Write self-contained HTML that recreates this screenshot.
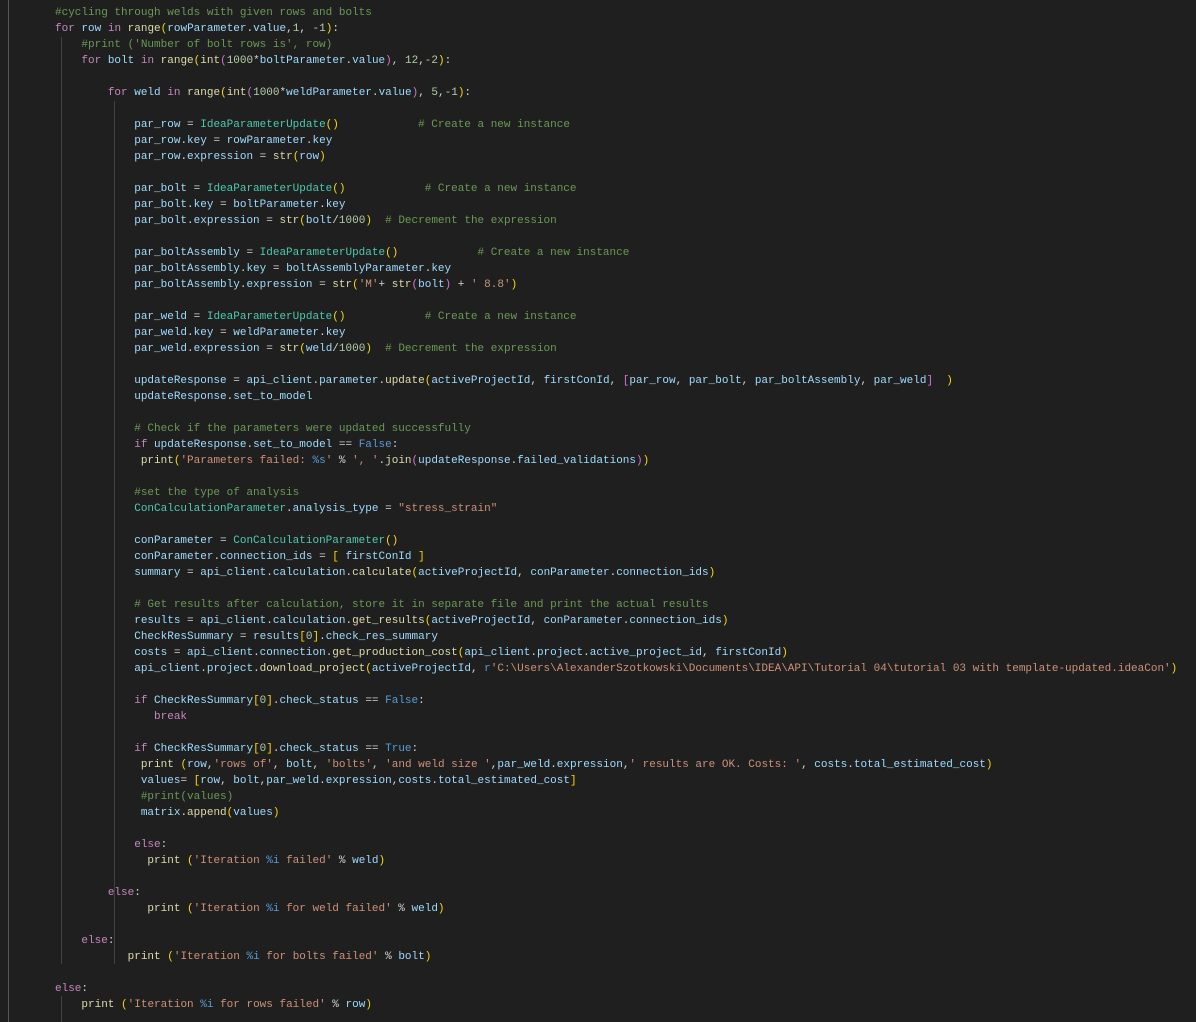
<!DOCTYPE html>
<html><head><meta charset="utf-8"><style>
html,body{margin:0;padding:0;background:#1f1f1f;width:1196px;height:1022px;overflow:hidden}
pre{position:absolute;left:55px;top:5px;margin:0;font-family:"Liberation Mono",monospace;font-size:11px;line-height:16px;color:#d4d4d4}
.k{color:#c586c0}.v{color:#9cdcfe}.f{color:#dcdcaa}.c{color:#6a9955}.n{color:#b5cea8}.s{color:#ce9178}.t{color:#4ec9b0}.b{color:#569cd6}
.p1{color:#ffd700}.p2{color:#da70d6}.p3{color:#179fff}
.g{position:absolute;width:1px;background:#404040}
</style></head><body>
<div class="g" style="left:8px;top:0;height:1022px;background:#555"></div>
<div class="g" style="left:61px;top:37px;height:927px"></div>
<div class="g" style="left:61px;top:996px;height:26px"></div>
<div class="g" style="left:114px;top:101px;height:863px"></div>
<pre><span class="c">#cycling through welds with given rows and bolts</span>
<span class="k">for</span> <span class="v">row</span> <span class="k">in</span> <span class="f">range</span><span class="p1">(</span><span class="v">rowParameter</span>.<span class="v">value</span>,<span class="n">1</span>, <span class="n">-1</span><span class="p1">)</span>:
    <span class="c">#print ('Number of bolt rows is', row)</span>
    <span class="k">for</span> <span class="v">bolt</span> <span class="k">in</span> <span class="f">range</span><span class="p1">(</span><span class="f">int</span><span class="p2">(</span><span class="n">1000</span>*<span class="v">boltParameter</span>.<span class="v">value</span><span class="p2">)</span>, <span class="n">12</span>,<span class="n">-2</span><span class="p1">)</span>:

        <span class="k">for</span> <span class="v">weld</span> <span class="k">in</span> <span class="f">range</span><span class="p1">(</span><span class="f">int</span><span class="p2">(</span><span class="n">1000</span>*<span class="v">weldParameter</span>.<span class="v">value</span><span class="p2">)</span>, <span class="n">5</span>,<span class="n">-1</span><span class="p1">)</span>:

            <span class="v">par_row</span> = <span class="t">IdeaParameterUpdate</span><span class="p1">()</span>            <span class="c"># Create a new instance</span>
            <span class="v">par_row</span>.<span class="v">key</span> = <span class="v">rowParameter</span>.<span class="v">key</span>
            <span class="v">par_row</span>.<span class="v">expression</span> = <span class="f">str</span><span class="p1">(</span><span class="v">row</span><span class="p1">)</span>

            <span class="v">par_bolt</span> = <span class="t">IdeaParameterUpdate</span><span class="p1">()</span>            <span class="c"># Create a new instance</span>
            <span class="v">par_bolt</span>.<span class="v">key</span> = <span class="v">boltParameter</span>.<span class="v">key</span>
            <span class="v">par_bolt</span>.<span class="v">expression</span> = <span class="f">str</span><span class="p1">(</span><span class="v">bolt</span>/<span class="n">1000</span><span class="p1">)</span>  <span class="c"># Decrement the expression</span>

            <span class="v">par_boltAssembly</span> = <span class="t">IdeaParameterUpdate</span><span class="p1">()</span>            <span class="c"># Create a new instance</span>
            <span class="v">par_boltAssembly</span>.<span class="v">key</span> = <span class="v">boltAssemblyParameter</span>.<span class="v">key</span>
            <span class="v">par_boltAssembly</span>.<span class="v">expression</span> = <span class="f">str</span><span class="p1">(</span><span class="s">'M'</span>+ <span class="f">str</span><span class="p2">(</span><span class="v">bolt</span><span class="p2">)</span> + <span class="s">' 8.8'</span><span class="p1">)</span>

            <span class="v">par_weld</span> = <span class="t">IdeaParameterUpdate</span><span class="p1">()</span>            <span class="c"># Create a new instance</span>
            <span class="v">par_weld</span>.<span class="v">key</span> = <span class="v">weldParameter</span>.<span class="v">key</span>
            <span class="v">par_weld</span>.<span class="v">expression</span> = <span class="f">str</span><span class="p1">(</span><span class="v">weld</span>/<span class="n">1000</span><span class="p1">)</span>  <span class="c"># Decrement the expression</span>

            <span class="v">updateResponse</span> = <span class="v">api_client</span>.<span class="v">parameter</span>.<span class="f">update</span><span class="p1">(</span><span class="v">activeProjectId</span>, <span class="v">firstConId</span>, <span class="p2">[</span><span class="v">par_row</span>, <span class="v">par_bolt</span>, <span class="v">par_boltAssembly</span>, <span class="v">par_weld</span><span class="p2">]</span>  <span class="p1">)</span>
            <span class="v">updateResponse</span>.<span class="v">set_to_model</span>

            <span class="c"># Check if the parameters were updated successfully</span>
            <span class="k">if</span> <span class="v">updateResponse</span>.<span class="v">set_to_model</span> == <span class="b">False</span>:
             <span class="f">print</span><span class="p1">(</span><span class="s">'Parameters failed: </span><span class="b">%s</span><span class="s">'</span> % <span class="s">', '</span>.<span class="f">join</span><span class="p2">(</span><span class="v">updateResponse</span>.<span class="v">failed_validations</span><span class="p2">)</span><span class="p1">)</span>

            <span class="c">#set the type of analysis</span>
            <span class="t">ConCalculationParameter</span>.<span class="v">analysis_type</span> = <span class="s">"stress_strain"</span>

            <span class="v">conParameter</span> = <span class="t">ConCalculationParameter</span><span class="p1">()</span>
            <span class="v">conParameter</span>.<span class="v">connection_ids</span> = <span class="p1">[</span> <span class="v">firstConId</span> <span class="p1">]</span>
            <span class="v">summary</span> = <span class="v">api_client</span>.<span class="v">calculation</span>.<span class="f">calculate</span><span class="p1">(</span><span class="v">activeProjectId</span>, <span class="v">conParameter</span>.<span class="v">connection_ids</span><span class="p1">)</span>

            <span class="c"># Get results after calculation, store it in separate file and print the actual results</span>
            <span class="v">results</span> = <span class="v">api_client</span>.<span class="v">calculation</span>.<span class="f">get_results</span><span class="p1">(</span><span class="v">activeProjectId</span>, <span class="v">conParameter</span>.<span class="v">connection_ids</span><span class="p1">)</span>
            <span class="v">CheckResSummary</span> = <span class="v">results</span><span class="p1">[</span><span class="n">0</span><span class="p1">]</span>.<span class="v">check_res_summary</span>
            <span class="v">costs</span> = <span class="v">api_client</span>.<span class="v">connection</span>.<span class="f">get_production_cost</span><span class="p1">(</span><span class="v">api_client</span>.<span class="v">project</span>.<span class="v">active_project_id</span>, <span class="v">firstConId</span><span class="p1">)</span>
            <span class="v">api_client</span>.<span class="v">project</span>.<span class="f">download_project</span><span class="p1">(</span><span class="v">activeProjectId</span>, <span class="b">r</span><span class="s">'C:\Users\AlexanderSzotkowski\Documents\IDEA\API\Tutorial 04\tutorial 03 with template-updated.ideaCon'</span><span class="p1">)</span>

            <span class="k">if</span> <span class="v">CheckResSummary</span><span class="p1">[</span><span class="n">0</span><span class="p1">]</span>.<span class="v">check_status</span> == <span class="b">False</span>:
               <span class="k">break</span>

            <span class="k">if</span> <span class="v">CheckResSummary</span><span class="p1">[</span><span class="n">0</span><span class="p1">]</span>.<span class="v">check_status</span> == <span class="b">True</span>:
             <span class="f">print</span> <span class="p1">(</span><span class="v">row</span>,<span class="s">'rows of'</span>, <span class="v">bolt</span>, <span class="s">'bolts'</span>, <span class="s">'and weld size '</span>,<span class="v">par_weld</span>.<span class="v">expression</span>,<span class="s">' results are OK. Costs: '</span>, <span class="v">costs</span>.<span class="v">total_estimated_cost</span><span class="p1">)</span>
             <span class="v">values</span>= <span class="p1">[</span><span class="v">row</span>, <span class="v">bolt</span>,<span class="v">par_weld</span>.<span class="v">expression</span>,<span class="v">costs</span>.<span class="v">total_estimated_cost</span><span class="p1">]</span>
             <span class="c">#print(values)</span>
             <span class="v">matrix</span>.<span class="f">append</span><span class="p1">(</span><span class="v">values</span><span class="p1">)</span>

            <span class="k">else</span>:
              <span class="f">print</span> <span class="p1">(</span><span class="s">'Iteration </span><span class="b">%i</span><span class="s"> failed'</span> % <span class="v">weld</span><span class="p1">)</span>

        <span class="k">else</span>:
              <span class="f">print</span> <span class="p1">(</span><span class="s">'Iteration </span><span class="b">%i</span><span class="s"> for weld failed'</span> % <span class="v">weld</span><span class="p1">)</span>

    <span class="k">else</span>:
           <span class="f">print</span> <span class="p1">(</span><span class="s">'Iteration </span><span class="b">%i</span><span class="s"> for bolts failed'</span> % <span class="v">bolt</span><span class="p1">)</span>

<span class="k">else</span>:
    <span class="f">print</span> <span class="p1">(</span><span class="s">'Iteration </span><span class="b">%i</span><span class="s"> for rows failed'</span> % <span class="v">row</span><span class="p1">)</span>
</pre>
</body></html>
